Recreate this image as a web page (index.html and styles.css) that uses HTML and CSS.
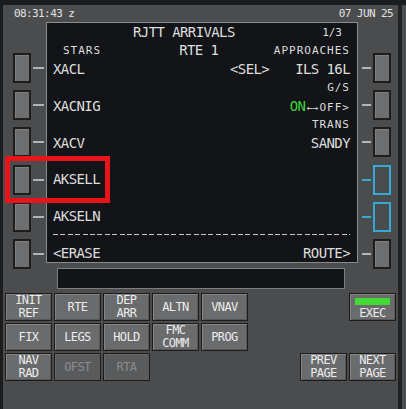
FILE: index.html
```html
<!DOCTYPE html>
<html lang="en-US">
<head>
    <meta charset="UTF-8">
    <title>CDU - RJTT Arrivals</title>
    <link rel="stylesheet" href="styles.css">
</head>
<body>
    <div class="bezel">
    <div class="cdu">
        <div class="header">
            <span>08:31:43 z</span>
            <span>07 JUN 25</span>
        </div>

        <div class="main">
            <div class="lsk-col left">
                <div class="lsk"><span class="btn"></span><span class="dash"></span></div>
                <div class="lsk"><span class="btn"></span><span class="dash"></span></div>
                <div class="lsk"><span class="btn"></span><span class="dash"></span></div>
                <div class="lsk"><span class="btn"></span><span class="dash"></span></div>
                <div class="lsk"><span class="btn"></span><span class="dash"></span></div>
                <div class="lsk"><span class="btn"></span><span class="dash"></span></div>
            </div>

            <div class="screen">
                <div class="row">
                    <span class="big title">RJTT ARRIVALS</span>
                    <span class="small page">1/3</span>
                </div>
                <div class="row">
                    <span class="small stars">STARS</span>
                    <span class="big rte">RTE 1</span>
                    <span class="small push">APPROACHES</span>
                </div>
                <div class="row">
                    <span class="big">XACL</span>
                    <span class="big sel">&lt;SEL&gt;</span>
                    <span class="big">ILS 16L</span>
                </div>
                <div class="row">
                    <span class="small push">G/S</span>
                </div>
                <div class="row">
                    <span class="big">XACNIG</span>
                    <span class="push"><span class="big on">ON</span><span class="arrows">&larr;&rarr;</span><span class="small">OFF&gt;</span></span>
                </div>
                <div class="row">
                    <span class="small push">TRANS</span>
                </div>
                <div class="row">
                    <span class="big">XACV</span>
                    <span class="big push">SANDY</span>
                </div>
                <div class="row"></div>
                <div class="row">
                    <span class="big">AKSELL</span>
                </div>
                <div class="row"></div>
                <div class="row">
                    <span class="big">AKSELN</span>
                </div>
                <div class="row">
                    <span class="dashes"></span>
                </div>
                <div class="row">
                    <span class="big">&lt;ERASE</span>
                    <span class="big push">ROUTE&gt;</span>
                </div>
            </div>

            <div class="lsk-col right">
                <div class="lsk"><span class="dash"></span><span class="btn"></span></div>
                <div class="lsk"><span class="dash"></span><span class="btn"></span></div>
                <div class="lsk"><span class="dash"></span><span class="btn"></span></div>
                <div class="lsk active"><span class="dash"></span><span class="btn"></span></div>
                <div class="lsk active"><span class="dash"></span><span class="btn"></span></div>
                <div class="lsk"><span class="dash"></span><span class="btn"></span></div>
            </div>

            <div class="scratchpad"></div>
        </div>

        <div class="keypad">
            <div class="keys">
                <div class="key">INIT<br>REF</div>
                <div class="key">RTE</div>
                <div class="key">DEP<br>ARR</div>
                <div class="key">ALTN</div>
                <div class="key">VNAV</div>
                <div class="key">FIX</div>
                <div class="key">LEGS</div>
                <div class="key">HOLD</div>
                <div class="key">FMC<br>COMM</div>
                <div class="key">PROG</div>
                <div class="key">NAV<br>RAD</div>
                <div class="key off">OFST</div>
                <div class="key off">RTA</div>
            </div>
            <div class="keys side">
                <div class="key exec"><span class="light"></span>EXEC</div>
                <div class="key prev">PREV<br>PAGE</div>
                <div class="key next">NEXT<br>PAGE</div>
            </div>
        </div>

        <div class="highlight"></div>
    </div>
    </div>
</body>
</html>
```

FILE: styles.css
```css
        body {
            margin: 0;
            background: #1b1c1d;
            font-family: 'DejaVu Sans Mono', monospace;
        }

        .bezel {
            height: 409px;
            box-sizing: border-box;
            border-top: 5px solid #1b1c1d;
            border-left: 3px solid #1b1c1d;
            background: #4c4d4e;
            overflow: hidden;
        }

        .cdu {
            position: relative;
            width: 395px;
            height: 404px;
            background: #4b4c4d;
            border-right: 4px solid #212223;
        }

        .header {
            height: 17px;
            padding: 0 5px 0 11px;
            display: flex;
            justify-content: space-between;
            align-items: center;
            font-size: 11px;
            letter-spacing: -0.6px;
            color: #e2e2e2;
        }

        /* screen + line select keys + scratchpad */
        .main {
            display: grid;
            grid-template-columns: 43px 312px 40px;
            grid-template-rows: 241px auto;
        }

        .lsk-col {
            grid-row: 1 / span 2;
            display: flex;
            flex-direction: column;
            gap: 7.2px;
            padding-top: 31px;
        }

        .lsk-col.left { grid-column: 1; }
        .lsk-col.right { grid-column: 3; }

        .lsk {
            height: 30px;
            display: flex;
            align-items: center;
        }

        .left .lsk { padding-left: 10px; }
        .right .lsk { padding-left: 4px; }

        .btn {
            width: 18px;
            height: 30px;
            box-sizing: border-box;
            border: 2px solid #1e1e1f;
            background: #6d6e6f;
            box-shadow: inset 1px 1px 0 #7e7f80;
        }

        .dash {
            height: 2px;
            background: #b4b5b6;
        }

        .left .dash { width: 11px; margin-left: 2px; }
        .right .dash { width: 9px; margin-right: 2px; }

        .lsk.active .btn {
            border-color: #35a9cf;
            background: #4a4b4c;
            box-shadow: none;
        }

        .lsk.active .dash {
            background: #35a9cf;
        }

        .screen {
            grid-column: 2;
            grid-row: 1;
            display: grid;
            grid-template-rows: repeat(13, 1fr);
            padding: 0 7px 0 6px;
            background: #121417;
            border: 1px solid #8a8b8c;
            color: #dedede;
        }

        .row {
            display: flex;
            align-items: center;
            white-space: nowrap;
        }

        .big {
            font-size: 14px;
            letter-spacing: -0.6px;
        }

        .small {
            font-size: 11px;
            letter-spacing: 1px;
        }

        .push { margin-left: auto; }

        .title { margin-left: 80px; }
        .page { margin-left: auto; margin-right: 8px; letter-spacing: 0; }
        .stars { margin-left: 10px; }
        .rte { margin-left: 78px; }
        .sel { margin-left: auto; margin-right: 26px; }

        .on { color: #3fd23c; }

        .arrows {
            font-size: 10px;
            letter-spacing: -0.5px;
            margin: 0 2px 0 1px;
        }

        .dashes {
            flex: 1;
            height: 1px;
            background: repeating-linear-gradient(90deg, #c8c8c8 0 5px, transparent 5px 7.4px);
        }

        .scratchpad {
            grid-column: 2;
            grid-row: 2;
            height: 21px;
            margin: 5px 13px 0 11px;
            box-sizing: border-box;
            background: #121417;
            border: 1px solid #7d7e7f;
        }

        /* mode keys */
        .keypad {
            display: flex;
            padding: 4px 2px 0 2px;
        }

        .keys {
            display: grid;
            grid-template-columns: repeat(5, 47px);
            grid-template-rows: repeat(3, 28px);
            gap: 2px;
        }

        .keys.side {
            margin-left: auto;
            grid-template-columns: repeat(2, 47px);
        }

        .keys.side .exec { grid-row: 1; grid-column: 2; }
        .keys.side .prev { grid-row: 3; grid-column: 1; }
        .keys.side .next { grid-row: 3; grid-column: 2; }

        .key {
            display: flex;
            flex-direction: column;
            justify-content: center;
            align-items: center;
            box-sizing: border-box;
            border: 1px solid #1c1c1d;
            background: #6a6b6c;
            box-shadow: inset 1px 1px 0 #838485, inset -1px -1px 0 #565758;
            color: #ececec;
            font-size: 12px;
            line-height: 13px;
            letter-spacing: -0.6px;
            text-align: center;
        }

        .key.off {
            background: #5a5b5c;
            box-shadow: inset 1px 1px 0 #666768;
            color: #8b8c8d;
        }

        .key.exec {
            justify-content: flex-start;
            padding-top: 4px;
            gap: 2px;
        }

        .light {
            width: 35px;
            height: 7px;
            background: #45d936;
        }

        .highlight {
            position: absolute;
            left: 2px;
            top: 151px;
            width: 105px;
            height: 47px;
            box-sizing: border-box;
            border: 5px solid #e8141a;
        }
```
